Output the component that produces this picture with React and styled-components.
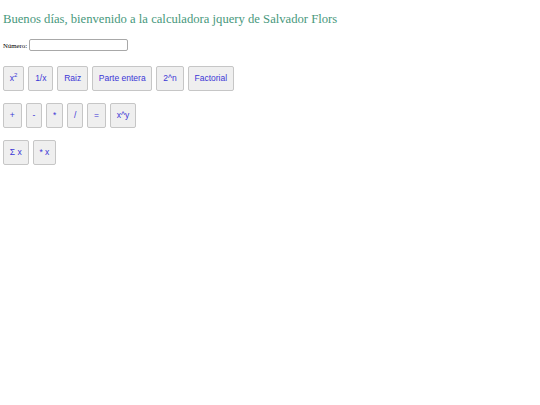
import React from "react";
import styled, { createGlobalStyle } from "styled-components";

const Global = createGlobalStyle`
  html, body { margin: 0; padding: 0; background: #ffffff; }
  body { font-family: "Liberation Serif", "Times New Roman", serif; }
`;

const Page = styled.div`
  display: flex;
  flex-direction: column;
  align-items: flex-start;
  padding: 12px 3px 0 3px;
`;

const Title = styled.h1`
  margin: 0;
  font-family: "Liberation Serif", "Times New Roman", serif;
  font-weight: normal;
  font-size: 12.65px;
  line-height: 15px;
  color: #48987c;
`;

const Field = styled.div`
  display: flex;
  align-items: center;
  gap: 2px;
  margin-top: 12px;
  height: 12px;
`;

const Label = styled.label`
  font-family: "Liberation Serif", "Times New Roman", serif;
  font-size: 6.8px;
  color: #000;
`;

const Input = styled.input`
  box-sizing: border-box;
  width: 99px;
  height: 12px;
  margin: 0;
  padding: 0 2px;
  border: 1px solid #a8a8a8;
  border-radius: 2px;
  font-size: 7px;
  background: #fff;
`;

const Row = styled.div`
  display: flex;
  gap: 4px;
  margin-top: ${(p) => p.$top}px;
`;

const Button = styled.button`
  box-sizing: border-box;
  height: 25px;
  margin: 0;
  padding: 0 5.85px;
  border: 1px solid #c6c6c6;
  border-radius: 2px;
  background: #efefef;
  color: #3b36d6;
  font-family: "Liberation Sans", Arial, sans-serif;
  font-size: 8.5px;
  line-height: 1;
  cursor: pointer;
  sup {
    font-size: 6px;
    line-height: 0;
    vertical-align: 4px;
  }
`;

export default function App() {
  return (
    <>
      <Global />
      <Page>
        <Title>Buenos días, bienvenido a la calculadora jquery de Salvador Flors</Title>
        <Field>
          <Label htmlFor="num">Número:</Label>
          <Input id="num" type="text" />
        </Field>
        <Row $top={15}>
          <Button>x<sup>2</sup></Button>
          <Button>1/x</Button>
          <Button>Raiz</Button>
          <Button>Parte entera</Button>
          <Button>2^n</Button>
          <Button>Factorial</Button>
        </Row>
        <Row $top={12}>
          <Button>+</Button>
          <Button>-</Button>
          <Button>*</Button>
          <Button>/</Button>
          <Button>=</Button>
          <Button>x^y</Button>
        </Row>
        <Row $top={12}>
          <Button>Σ x</Button>
          <Button>* x</Button>
        </Row>
      </Page>
    </>
  );
}
